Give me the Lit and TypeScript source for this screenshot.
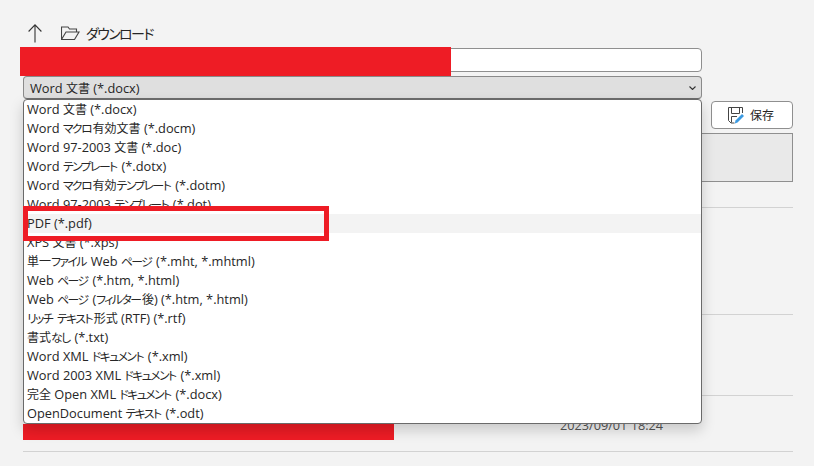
import { LitElement, css, html } from "lit";
import { customElement } from "lit/decorators.js";

const FILE_TYPES = [
  "Word 文書 (*.docx)",
  "Word マクロ有効文書 (*.docm)",
  "Word 97-2003 文書 (*.doc)",
  "Word テンプレート (*.dotx)",
  "Word マクロ有効テンプレート (*.dotm)",
  "Word 97-2003 テンプレート (*.dot)",
  "PDF (*.pdf)",
  "XPS 文書 (*.xps)",
  "単一ファイル Web ページ (*.mht, *.mhtml)",
  "Web ページ (*.htm, *.html)",
  "Web ページ (フィルター後) (*.htm, *.html)",
  "リッチ テキスト形式 (RTF) (*.rtf)",
  "書式なし (*.txt)",
  "Word XML ドキュメント (*.xml)",
  "Word 2003 XML ドキュメント (*.xml)",
  "完全 Open XML ドキュメント (*.docx)",
  "OpenDocument テキスト (*.odt)",
];

// the original UI font has narrow kana and slightly wider latin, so runs get their own size
const label = (text: string) =>
  text
    .split(/([ぁ-んァ-ヶー]+|[一-龠]+)/)
    .filter(Boolean)
    .map((run) => {
      if (/^[ぁ-んァ-ヶー]/.test(run)) return html`<span class="kana">${run}</span>`;
      if (/^[一-龠]/.test(run)) return html`<span class="kanji">${run}</span>`;
      return run;
    });

@customElement("app-root")
export class AppRoot extends LitElement {
  static styles = css`
    :host {
      display: block;
      width: 814px;
      height: 466px;
      overflow: hidden;
      background: #f3f3f3;
      color: #262626;
      font-family: "Open Sans", "Noto Sans CJK JP", sans-serif;
      font-size: 12.8px;
      font-feature-settings: "palt";
    }

    .kana {
      font-size: 11.8px;
      letter-spacing: -1.5px;
      margin-right: 1.5px;
    }

    .kanji {
      font-size: 12px;
    }

    .page {
      position: relative;
      height: 466px;
      padding: 22px 21px 0 23px;
      box-sizing: border-box;
    }

    .nav {
      display: flex;
      align-items: center;
      height: 22px;
      margin-bottom: 4px;
      padding-left: 5px;
      font-size: 14px;
      letter-spacing: -1.6px;
    }

    .nav .folder {
      margin: 0 6px 0 19px;
    }

    .field {
      width: 679px;
      height: 24px;
      box-sizing: border-box;
      background: #fff;
      border: 1px solid #8f8f8f;
      border-radius: 4px;
    }

    .select {
      display: flex;
      align-items: center;
      justify-content: space-between;
      width: 679px;
      height: 23px;
      margin-top: 4px;
      padding: 0 5px 0 6px;
      box-sizing: border-box;
      background: #dfdfdf;
      border: 1px solid #8a8a8a;
      border-bottom-color: #6e6e6e;
      border-radius: 4px;
    }

    .actions {
      display: flex;
      justify-content: flex-end;
      margin-top: 2px;
    }

    .save {
      display: flex;
      align-items: center;
      justify-content: center;
      gap: 6px;
      width: 82px;
      height: 28px;
      padding-right: 2px;
      box-sizing: border-box;
      background: #fff;
      border: 1px solid #8f8f8f;
      border-radius: 4px;
    }

    .header-box {
      height: 49px;
      margin-top: 4px;
      box-sizing: border-box;
      background: #e9e9e9;
      border: 1px solid #8f8f8f;
    }

    .row {
      display: flex;
      align-items: flex-end;
      border-bottom: 1px solid #d2d2d2;
      box-sizing: border-box;
    }

    .row.first {
      height: 26px;
    }

    .row.second {
      height: 107px;
    }

    .row.third {
      height: 81px;
    }

    .row.fourth {
      height: 56px;
    }

    .date {
      margin: 0 0 18px 537px;
      font-size: 12.7px;
      color: #555;
      line-height: 16px;
      white-space: nowrap;
    }

    .dropdown {
      position: absolute;
      left: 23px;
      top: 99px;
      width: 679px;
      height: 325px;
      box-sizing: border-box;
      background: #fff;
      border: 1px solid #6a6a6a;
      border-radius: 4px;
      box-shadow: 0 6px 14px rgba(0, 0, 0, 0.18);
    }

    .option {
      height: 19px;
      line-height: 19px;
      padding-left: 3px;
      white-space: nowrap;
    }

    .option.hover {
      background: #f3f3f3;
    }

    .redact {
      position: absolute;
      background: #ee1c25;
    }

    .redact.name {
      left: 20px;
      top: 47px;
      width: 431px;
      height: 29px;
    }

    .redact.file {
      left: 23px;
      top: 424px;
      width: 371px;
      height: 16px;
    }

    .marker {
      position: absolute;
      left: 23px;
      top: 206px;
      width: 306px;
      height: 35px;
      box-sizing: border-box;
      border: 5px solid #ee1c25;
    }

    svg {
      display: block;
      flex: none;
    }
  `;

  render() {
    return html`
      <div class="page">
        <div class="nav">
          <svg width="14" height="19" viewBox="0 0 14 19" fill="none" stroke="#333" stroke-width="1.1">
            <path d="M7 .5V18.500M.6 7.500 7 .8 13.400 7.500" />
          </svg>
          <svg class="folder" width="19" height="14" viewBox="0 0 19 14" fill="none" stroke="#444" stroke-width="1.1">
            <path d="M.5 13.500V1h6.500l1.500 2h7V6M.5 13.500h13l4.500-7.500H5L.5 13.500z" />
          </svg>
          <span>ダウンロード</span>
        </div>
        <div class="field"></div>
        <div class="select">
          <span>${label(FILE_TYPES[0])}</span>
          <svg width="7" height="4" viewBox="0 0 7 4" fill="none" stroke="#333" stroke-width="1.1">
            <path d="M.5.5l3 3 3-3" />
          </svg>
        </div>
        <div class="actions">
          <div class="save">
            <svg width="16" height="17" viewBox="0 0 16 17" fill="none">
              <path d="M6.500 16H3L.5 13.500V.5H14.500V6M3.500.5V6.500H11.500V.5M3.500 15.500V9.500H9" stroke="#444" />
              <path d="M6.800 16.500l.7-3L14 7l2 2-6.500 6.500z" fill="#3b9ae1" />
            </svg>
            <span class="kanji">保存</span>
          </div>
        </div>
        <div class="header-box"></div>
        <div class="row first"></div>
        <div class="row second"></div>
        <div class="row third"></div>
        <div class="row fourth">
          <span class="date">2023/09/01 18:24</span>
        </div>

        <div class="redact name"></div>
        <div class="redact file"></div>
        <div class="dropdown">
          ${FILE_TYPES.map(
            (t, i) => html`<div class="option ${i === 6 ? "hover" : ""}">${label(t)}</div>`,
          )}
        </div>
        <div class="marker"></div>
      </div>
    `;
  }
}

declare global {
  interface HTMLElementTagNameMap {
    "app-root": AppRoot;
  }
}
